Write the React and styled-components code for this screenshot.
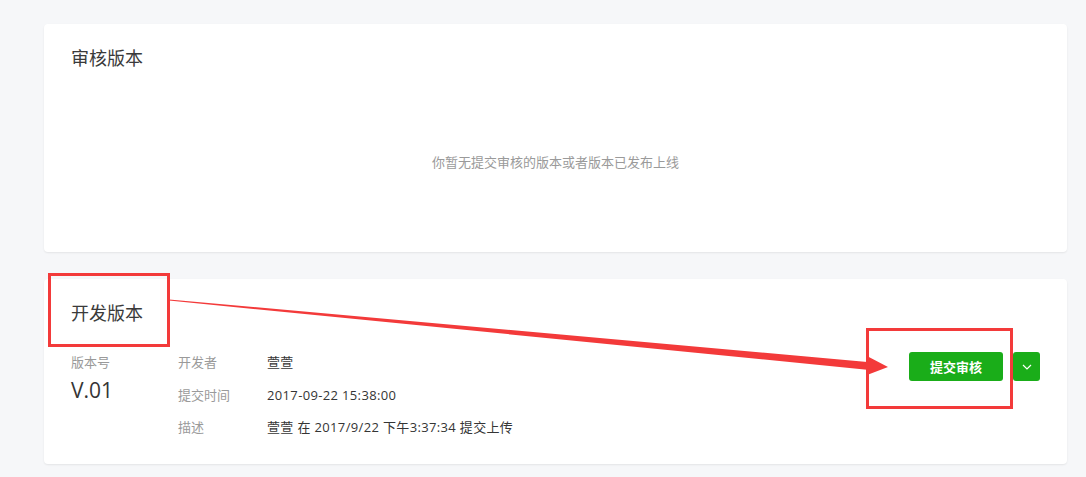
import React from 'react';
import styled, { createGlobalStyle } from 'styled-components';

const GlobalStyle = createGlobalStyle`
  body {
    margin: 0;
    background: #f6f7f9;
    font-family: "Noto Sans CJK SC", "Liberation Sans", sans-serif;
    color: #353535;
  }
`;

const info = [
  { label: '开发者', value: '萱萱' },
  { label: '提交时间', value: '2017-09-22 15:38:00' },
  { label: '描述', value: '萱萱 在 2017/9/22 下午3:37:34 提交上传' },
];

export default function App() {
  return (
    <Page>
      <GlobalStyle />
      <Card height={228}>
        <Title>审核版本</Title>
        <Empty>你暂无提交审核的版本或者版本已发布上线</Empty>
      </Card>
      <Card height={185}>
        <Title>开发版本</Title>
        <Body>
          <VersionCol>
            <Label>版本号</Label>
            <Version>V.01</Version>
          </VersionCol>
          <InfoGrid>
            {info.map(item => (
              <React.Fragment key={item.label}>
                <Label>{item.label}</Label>
                <Value>{item.value}</Value>
              </React.Fragment>
            ))}
          </InfoGrid>
          <Actions>
            <GreenButton>提交审核</GreenButton>
            <DropButton>
              <svg width="10" height="6" viewBox="0 0 10 6">
                <path d="M1 1l4 4 4-4" fill="none" stroke="#fff" strokeWidth="1.2" />
              </svg>
            </DropButton>
          </Actions>
        </Body>
      </Card>

      <Mark style={{ left: 48, top: 273, width: 122, height: 74 }} />
      <Mark style={{ left: 866, top: 328, width: 147, height: 81 }} />
      <Arrow width="1086" height="477" viewBox="0 0 1086 477">
        <polygon
          fill="#f33a3a"
          points="169.1,299.4 867.3,362 867.9,356.5 888,367 866.4,375.3 867,369.7 168.9,300.6"
        />
      </Arrow>
    </Page>
  );
}

const Page = styled.div`
  position: relative;
  width: 1086px;
  height: 477px;
  overflow: hidden;
  padding: 24px 19px 0 44px;
  box-sizing: border-box;
  display: flex;
  flex-direction: column;
  gap: 27px;
`;

const Card = styled.div`
  background: #fff;
  border-radius: 4px;
  box-shadow: 0 1px 2px rgba(0, 0, 0, 0.08);
  height: ${p => p.height}px;
  box-sizing: border-box;
  padding: 20px 27px 0;
  display: flex;
  flex-direction: column;
`;

const Title = styled.h2`
  margin: 0;
  font-size: 18px;
  font-weight: normal;
  line-height: 26px;
  color: #3a3a3a;
`;

const Empty = styled.div`
  flex: 1;
  display: flex;
  align-items: center;
  justify-content: center;
  font-size: 13px;
  color: #9a9a9a;
`;

const Body = styled.div`
  display: flex;
  align-items: flex-start;
  margin-top: 28px;
`;

const VersionCol = styled.div`
  width: 107px;
  display: flex;
  flex-direction: column;
  gap: 5px;
`;

const Label = styled.div`
  font-size: 13px;
  line-height: 18px;
  color: #9a9a9a;
`;

const Version = styled.div`
  font-family: "Open Sans", "Noto Sans CJK SC", sans-serif;
  font-size: 21px;
  line-height: 28px;
  color: #353535;
`;

const InfoGrid = styled.div`
  display: grid;
  grid-template-columns: 89px auto;
  row-gap: 14.5px;
  flex: 1;
  align-content: start;
`;

const Value = styled.div`
  font-family: "Open Sans", "Noto Sans CJK SC", sans-serif;
  font-size: 13px;
  line-height: 18px;
  letter-spacing: 0.35px;
  color: #353535;
`;

const Actions = styled.div`
  display: flex;
  gap: 10px;
  margin-top: -1px;
`;

const GreenButton = styled.button`
  width: 94px;
  height: 29px;
  border: 0;
  border-radius: 3px;
  background: #1aad19;
  color: #fff;
  font-family: inherit;
  font-size: 13px;
  font-weight: bold;
  padding: 0;
`;

const DropButton = styled(GreenButton)`
  width: 27px;
  display: flex;
  align-items: center;
  justify-content: center;
`;

const Mark = styled.div`
  position: absolute;
  border: 3px solid #f33a3a;
  box-sizing: border-box;
  pointer-events: none;
`;

const Arrow = styled.svg`
  position: absolute;
  left: 0;
  top: 0;
  pointer-events: none;
`;
